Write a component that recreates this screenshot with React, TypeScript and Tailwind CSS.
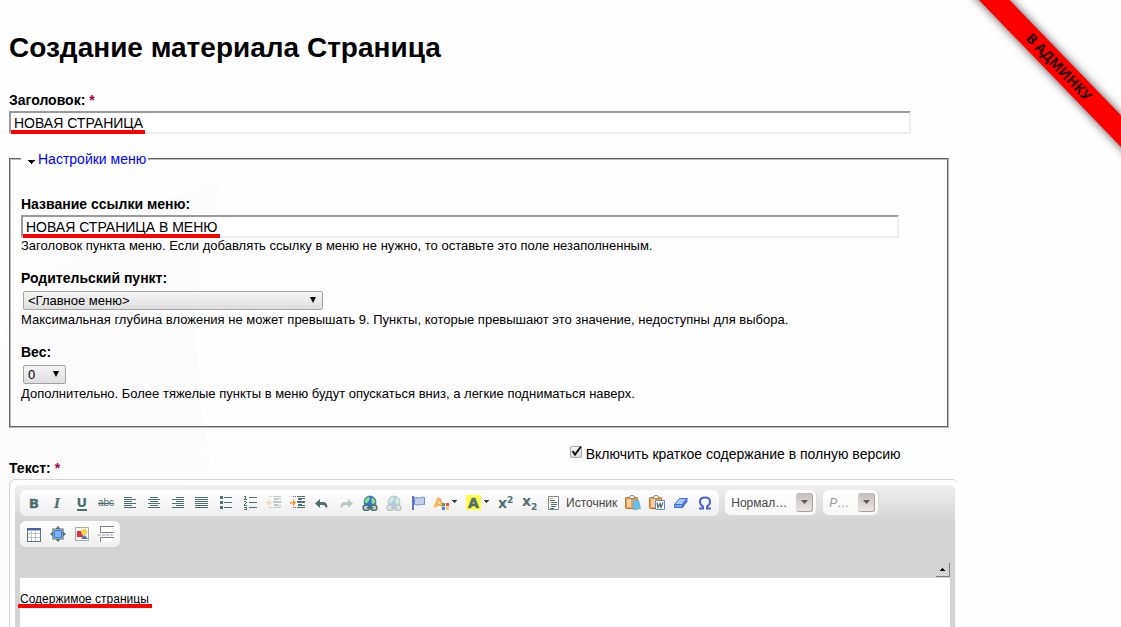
import { useState } from 'react'
import type { ReactNode } from 'react'

const INK = '#4f6f6f'

interface ToolProps {
  label: string
  children: ReactNode
  text?: string
  menu?: boolean
  disabled?: boolean
}

function Tool({ label, children, text, menu, disabled }: ToolProps) {
  return (
    <button
      type="button"
      title={label}
      aria-label={label}
      disabled={disabled}
      className="flex h-6 items-center px-1 text-xs text-[#474747] disabled:opacity-35"
    >
      <svg viewBox="0 0 16 16" className="size-4 shrink-0 overflow-visible" aria-hidden>
        {children}
      </svg>
      {text && <span className="pl-1">{text}</span>}
      {menu && (
        <svg viewBox="0 0 8 16" className="h-4 w-2" aria-hidden>
          <path d="M2 5h5v1H6v1H5v1H4V7H3V6H2z" fill="#3a3a3a" shapeRendering="crispEdges" />
        </svg>
      )}
    </button>
  )
}

// Horizontal 1px strokes, each given as [x, y, width]
function Lines({ rows, color = INK }: { rows: number[][]; color?: string }) {
  return (
    <g fill={color} shapeRendering="crispEdges">
      {rows.map(([x, y, w], i) => (
        <rect key={i} x={x} y={y} width={w} height={1} />
      ))}
    </g>
  )
}

function IndentLines() {
  return (
    <Lines
      rows={[
        [3, 1, 1], [5, 1, 1], [7, 1, 8],
        [8, 3, 7], [8, 4, 4],
        [7, 6, 8], [7, 7, 8],
        [8, 9, 4], [8, 10, 7],
        [3, 12, 1], [5, 12, 1], [7, 12, 8],
      ]}
    />
  )
}

function UndoArrow() {
  return <path d="M1 8.500 6 4v3h3c3 0 4.600 2 4.500 5.500h-2c0-1.500-1-2.500-2.500-2.500H6v3z" fill={INK} />
}

function Globe() {
  return (
    <>
      <circle cx="8" cy="7" r="6" fill="#3c6fd6" stroke="#37608f" strokeWidth=".7" />
      <path d="M3.500 4 6.500 1.700 8 3.500 6.500 6.500 4.500 8.500 2.500 7zM9.500 3l2.500.5 1.500 3-2 3.500-2-2.500z" fill="#7fe87a" />
      <rect x="1.200" y="10.200" width="6" height="5" rx="2" fill="#cdd6d6" stroke={INK} strokeWidth="1.500" />
      <rect x="8.800" y="10.200" width="6" height="5" rx="2" fill="#cdd6d6" stroke={INK} strokeWidth="1.500" />
      <path d="M4.500 12.700h7" stroke={INK} strokeWidth="1.500" />
    </>
  )
}

function Clipboard() {
  return (
    <>
      <rect x=".5" y="2.500" width="12" height="11" rx="1" fill="#f0a04b" stroke="#b9712f" />
      <path d="M2 4h4v8H2z" fill="#fbd09a" />
      <path d="M4 3.500V2l2-1.500h2L10 2v1.500z" fill="#eceae5" stroke="#8a7455" strokeWidth=".8" />
    </>
  )
}

function TextTools() {
  return (
    <div className="flex rounded-md bg-linear-to-b from-white to-[#efefef] px-0.5 py-px">
      <Tool label="Полужирный">
        <text x="3" y="13" fontFamily="DejaVu Sans" fontWeight="700" fontSize="13" fill={INK} stroke={INK} strokeWidth=".5">B</text>
      </Tool>
      <Tool label="Курсив">
        <text x="4" y="13" fontFamily="DejaVu Serif" fontWeight="700" fontStyle="italic" fontSize="13" fill={INK}>I</text>
      </Tool>
      <Tool label="Подчеркнутый">
        <text x="2.500" y="12" fontFamily="DejaVu Sans" fontWeight="700" fontSize="13" fill={INK}>U</text>
        <path d="M3 14h10v2H3z" fill={INK} />
      </Tool>
      <Tool label="Зачеркнутый">
        <text x="0" y="11" fontFamily="Liberation Sans" fontSize="10" fill={INK}>abc</text>
        <path d="M0 8h16v1H0z" fill={INK} />
      </Tool>
      <Tool label="По левому краю">
        <Lines rows={[[2, 2, 8], [2, 4, 12], [2, 6, 8], [2, 8, 12], [2, 10, 8], [2, 12, 12]]} />
      </Tool>
      <Tool label="По центру">
        <Lines rows={[[4, 2, 8], [2, 4, 12], [4, 6, 8], [2, 8, 12], [4, 10, 8], [2, 12, 12]]} />
      </Tool>
      <Tool label="По правому краю">
        <Lines rows={[[6, 2, 8], [2, 4, 12], [6, 6, 8], [2, 8, 12], [6, 10, 8], [2, 12, 12]]} />
      </Tool>
      <Tool label="По ширине">
        <Lines rows={[[1, 2, 13], [1, 4, 13], [1, 6, 13], [1, 8, 13], [1, 10, 13], [1, 12, 13]]} />
      </Tool>
      <Tool label="Маркированный список">
        <path d="M2 1h3v3H2zM2 6h3v3H2zM2 11h3v3H2z" fill={INK} />
        <Lines rows={[[6, 2, 8], [6, 7, 8], [6, 12, 8]]} />
      </Tool>
      <Tool label="Нумерованный список">
        <path
          d="M2 1h2v3H3V2H2zM2 4h3v1H2zM2 6h2v1h1v1H4v1H3v1h2v1H2V9h1V8h1V7H2zM2 12h3v3H2v-1h2v-1H2z"
          fill={INK}
          shapeRendering="crispEdges"
        />
        <Lines rows={[[7, 2, 8], [7, 7, 8], [7, 12, 8]]} />
      </Tool>
      <Tool label="Уменьшить отступ" disabled>
        <IndentLines />
        <path d="M0 7.500 3.500 4v3H6v1.500H3.500v3z" fill="#f5a040" />
      </Tool>
      <Tool label="Увеличить отступ">
        <IndentLines />
        <path d="M6 7.500 3 4v3H0v1.500h3v3z" fill="#f5962e" />
      </Tool>
      <Tool label="Отменить">
        <UndoArrow />
      </Tool>
      <Tool label="Повторить" disabled>
        <g transform="matrix(-1 0 0 1 16 0)">
          <UndoArrow />
        </g>
      </Tool>
      <Tool label="Вставить ссылку">
        <Globe />
      </Tool>
      <Tool label="Убрать ссылку" disabled>
        <Globe />
      </Tool>
      <Tool label="Вставить якорь">
        <path d="M2 1h2v14H2z" fill="#6a6fc4" />
        <path d="M4.500 2.500c2-1 3 1.200 5 .5s3-1 5-.5v7c-2-.5-3 0-5 .5s-3-1-5-.5z" fill="#c9d2e2" stroke="#5f8fe6" />
      </Tool>
      <Tool label="Цвет текста" menu>
        <text x="0" y="12" fontFamily="DejaVu Sans" fontWeight="700" fontSize="13" fill="#f7b262" stroke="#f7b262" strokeWidth=".3">A</text>
        <path d="M8 8h3v3H8z" fill="#3fa648" />
        <path d="M12 8h3v3h-3z" fill="#f04848" />
        <path d="M8 12h3v3H8z" fill="#4a80f0" />
        <path d="M12 12h3v3h-3z" fill="#f6cf52" />
      </Tool>
      <Tool label="Цвет фона" menu>
        <path d="M0 0h15v15H0z" fill="#ffff45" />
        <text x="2" y="12.500" fontFamily="DejaVu Sans" fontWeight="700" fontSize="14" fill={INK} stroke={INK} strokeWidth=".5">A</text>
      </Tool>
      <Tool label="Надстрочный индекс">
        <text x="0" y="13" fontFamily="DejaVu Sans" fontWeight="700" fontSize="14" fill={INK}>x</text>
        <text x="9" y="8" fontFamily="DejaVu Sans" fontWeight="700" fontSize="9" fill={INK}>2</text>
      </Tool>
      <Tool label="Подстрочный индекс">
        <text x="0" y="11" fontFamily="DejaVu Sans" fontWeight="700" fontSize="14" fill={INK}>x</text>
        <text x="9" y="15" fontFamily="DejaVu Sans" fontWeight="700" fontSize="9" fill={INK}>2</text>
      </Tool>
      <Tool label="Источник" text="Источник">
        <path d="M2.500 1.500h10v13h-10z" fill="#fff" stroke="#7d9191" />
        <Lines rows={[[4, 3, 3]]} color="#f5a040" />
        <Lines rows={[[4, 5, 5], [5, 7, 6], [5, 9, 6], [5, 11, 5], [4, 13, 4]]} />
      </Tool>
      <Tool label="Вставить только текст">
        <Clipboard />
        <path d="m7.500 5.500 6-.5 2 8.500-7 1.500z" fill="#62c3ea" stroke="#7aa5b8" strokeWidth=".7" />
      </Tool>
      <Tool label="Вставить из Word">
        <Clipboard />
        <path d="M6.500 5.500h9v9h-9z" fill="#fff" stroke="#6689cc" />
        <path d="m8 7.500 1 5 2-4 1 4 2-5" fill="none" stroke="#566a80" strokeWidth="1.300" />
      </Tool>
      <Tool label="Убрать форматирование">
        <path d="m1.500 9.500 5-6h7.500l-4.500 6z" fill="#a9c8fa" stroke="#416bd1" />
        <path d="M1.500 9.500h8v3h-8z" fill="#7ba4f0" stroke="#416bd1" />
        <path d="m9.500 9.500 4.500-6v3l-4.500 6z" fill="#5076dc" stroke="#416bd1" />
      </Tool>
      <Tool label="Вставить специальный символ">
        <path
          d="M2 13.500h4v-2C3.500 10 3 8.500 3 6.800 3 4.300 5 2.500 8 2.500s5 1.800 5 4.300c0 1.700-.5 3.200-3 4.700v2h4"
          fill="none"
          stroke="#4864d2"
          strokeWidth="2"
        />
      </Tool>
    </div>
  )
}

function InsertTools() {
  return (
    <div className="flex rounded-md bg-linear-to-b from-white to-[#efefef] px-0.5 py-px">
      <Tool label="Таблица">
        <g shapeRendering="crispEdges">
          <path d="M1 2h14v14H1z" fill="#5f7474" />
          <path d="M2 4h12v11H2z" fill="#b9c2c2" />
          <path d="M1 2h14v2H1z" fill="#4463a4" />
          <path d="M2 5h3v2H2zM6 5h3v2H6zM10 5h4v2h-4zM2 8h3v3H2zM6 8h3v3H6zM10 8h4v3h-4zM2 12h3v3H2zM6 12h3v3H6zM10 12h4v3h-4z" fill="#fff" />
        </g>
      </Tool>
      <Tool label="Развернуть">
        <path d="m8 0 2.500 3h-5zM8 16l2.500-3h-5zM0 8l3-2.500v5zM16 8l-3-2.500v5z" fill={INK} />
        <path d="M3 3h10v10H3z" fill="#e8f0f8" stroke={INK} strokeWidth="1.200" />
        <path d="M4.500 4.500h7v7h-7z" fill="#82b5f8" stroke="#3f71dc" />
      </Tool>
      <Tool label="Изображение">
        <path d="M1.500 1.500h13v13h-13z" fill="#f6f4f0" stroke="#aaa" />
        <path d="M3 5h6v6H3z" fill="#d53440" />
        <path d="M7 13 10.500 9l3.500 4z" fill="#4a78b0" />
        <circle cx="10" cy="6" r="3" fill="#f8d548" />
      </Tool>
      <Tool label="Разрыв страницы">
        <path d="M2 0h14v6H2zM2 11h14v5H2z" fill="#fff" />
        <path d="M2.500 0v6.500H16M2.500 16v-4.500H16M2 .5h14" fill="none" stroke="#858585" />
        <path d="M0 9h16" stroke="#8aa4c0" strokeDasharray="3 1" />
      </Tool>
    </div>
  )
}

function Combo({ label, value, muted }: { label: string; value: string; muted?: boolean }) {
  return (
    <button
      type="button"
      aria-label={label}
      className="flex h-[26px] items-center gap-[9px] rounded-md border-r border-b border-[#dcdcdc] bg-linear-to-b from-white to-[#f7f7f7] pr-[3px] pl-1.5 text-xs"
    >
      <span className={muted ? 'text-[#999] italic' : 'text-[#474747]'}>{value}</span>
      <span className="flex h-[19px] w-[17px] items-center justify-center rounded-[3px] border-r border-b border-[#a9a3a3] bg-linear-to-b from-[#c4bdbd] to-[#ebe6e6]">
        <svg viewBox="0 0 7 4" className="h-1 w-[7px]" aria-hidden>
          <path d="M0 0h7L3.500 4z" fill="#5c5656" />
        </svg>
      </span>
    </button>
  )
}

interface FieldProps {
  id: string
  label: string
  help?: string
  required?: boolean
  children: ReactNode
}

function Field({ id, label, help, required, children }: FieldProps) {
  return (
    <div>
      <label htmlFor={id} className="block w-fit text-sm/4 font-bold">
        {label}
        {required && <span className="text-[#a00040]"> *</span>}
      </label>
      <div className="mt-[3px] flex h-[23px] items-center">{children}</div>
      {help && <p className="text-[13px]/4">{help}</p>}
    </div>
  )
}

function TextInput({ id, initial, mark }: { id: string; initial: string; mark: string }) {
  const [value, setValue] = useState(initial)
  return (
    <div className="relative w-[95%]">
      <input
        id={id}
        type="text"
        value={value}
        onChange={e => setValue(e.target.value)}
        className="block h-[23px] w-full border-2 border-t-[#9a9a9a] border-r-[#eee] border-b-[#eee] border-l-[#9a9a9a] bg-white px-[3px] text-sm outline-none"
      />
      <span className={`absolute bottom-0 left-0.5 h-1 bg-[#f00] ${mark}`} />
    </div>
  )
}

function SelectBox({ id, options, width }: { id: string; options: string[]; width: string }) {
  return (
    <div className={`relative ml-0.5 ${width}`}>
      <select
        id={id}
        className="block h-[19px] w-full appearance-none rounded-xs border border-[#a3a3a3] bg-linear-to-b from-[#f6f6f6] to-[#dedede] pl-1 text-[13px]/4 outline-none"
      >
        {options.map(o => (
          <option key={o}>{o}</option>
        ))}
      </select>
      <svg viewBox="0 0 6 6" className="pointer-events-none absolute top-1.5 right-[7px] size-1.5" aria-hidden>
        <path d="M0 0h6L3 6z" />
      </svg>
    </div>
  )
}

function AdminRibbon() {
  return (
    <div className="absolute top-0 right-0 size-[200px] overflow-hidden">
      <a
        href="#admin"
        className="absolute top-14 -left-[22px] flex h-[22px] w-80 rotate-46 items-center justify-center bg-[#f00] font-['Open_Sans',sans-serif] text-sm font-bold text-[#200] shadow-[0_0_10px_#000000b0]"
      >
        В АДМИНКУ
      </a>
    </div>
  )
}

// Faint leaf shape behind the form
function Watermark() {
  return (
    <svg viewBox="0 0 320 480" className="pointer-events-none absolute top-[150px] left-0 w-80" aria-hidden>
      <path d="M222 30C120 60 40 110 0 190v260c70-50 150-80 210-135C190 210 190 110 222 30z" fill="#fcfcfc" />
    </svg>
  )
}

export default function App() {
  const [teaser, setTeaser] = useState(true)

  return (
    <div className="relative flex min-h-screen flex-col bg-[#fefefe] pl-[9px] font-['Liberation_Sans',Arial,sans-serif] text-black">
      <Watermark />
      <AdminRibbon />
      <form className="relative flex w-full max-w-[949px] flex-1 flex-col" onSubmit={e => e.preventDefault()}>
        <h1 className="mt-8 mb-7 text-[28px]/8 font-bold">Создание материала Страница</h1>

        <Field id="title" label="Заголовок:" required>
          <TextInput id="title" initial="НОВАЯ СТРАНИЦА" mark="w-[134px]" />
        </Field>

        <fieldset className="mt-[17px] mr-[9px] border-2 border-[#b8b8b8] pr-0.5 pb-6 pl-2.5 [border-style:groove]">
          <legend className="pr-0.5 text-sm/4">
            <a href="#menu" className="flex items-center text-[#00f]">
              <svg viewBox="0 0 17 16" className="h-4 w-[17px]" aria-hidden>
                <path d="M7 9h7v1h-1v1h-1v1h-1v1h-1v-1H9v-1H8v-1H7z" fill="#000" shapeRendering="crispEdges" />
              </svg>
              Настройки меню
            </a>
          </legend>
          <div className="flex flex-col gap-4 pt-[29px]">
            <Field
              id="link-title"
              label="Название ссылки меню:"
              help="Заголовок пункта меню. Если добавлять ссылку в меню не нужно, то оставьте это поле незаполненным."
            >
              <TextInput id="link-title" initial="НОВАЯ СТРАНИЦА В МЕНЮ" mark="w-[197px]" />
            </Field>
            <Field
              id="parent"
              label="Родительский пункт:"
              help="Максимальная глубина вложения не может превышать 9. Пункты, которые превышают это значение, недоступны для выбора."
            >
              <SelectBox id="parent" options={['<Главное меню>']} width="w-[300px]" />
            </Field>
            <Field
              id="weight"
              label="Вес:"
              help="Дополнительно. Более тяжелые пункты в меню будут опускаться вниз, а легкие подниматься наверх."
            >
              <SelectBox id="weight" options={['0', '1', '2', '3']} width="w-[43px]" />
            </Field>
          </div>
        </fieldset>

        <div className="mt-[18px] flex w-[95%] items-start justify-between pr-2.5">
          <label htmlFor="body" className="pt-3.5 text-sm/4 font-bold">
            Текст: <span className="text-[#a00040]">*</span>
          </label>
          <label className="flex gap-1 text-sm/4">
            <span className="relative size-3">
              <input
                type="checkbox"
                checked={teaser}
                onChange={e => setTeaser(e.target.checked)}
                className="block size-3 appearance-none rounded-xs border border-[#a9a9a9] bg-linear-to-b from-[#f4f4f4] to-[#dcdcdc]"
              />
              {teaser && (
                <svg viewBox="0 0 12 12" className="pointer-events-none absolute inset-0 size-3 overflow-visible" aria-hidden>
                  <path d="m2.500 5 2.500 3.500L11 .5" fill="none" stroke="#111" strokeWidth="2" />
                </svg>
              )}
            </span>
            Включить краткое содержание в полную версию
          </label>
        </div>

        <div className="mt-[3px] flex flex-1 flex-col rounded-t-md border-t border-l border-[#d3d3d3] pt-[5px] pr-[3px] pl-[5px]">
          <div className="flex flex-1 flex-col rounded-t-md bg-[#d3d3d3] px-[5px]">
            <div className="-mx-[5px] rounded-t-md bg-linear-to-b from-[#f0f0f0] to-[#d3d3d3] to-40% px-[5px] pt-[5px] pb-px">
              <div className="flex flex-wrap gap-x-1.5 gap-y-[5px]">
                <TextTools />
                <Combo label="Форматирование" value="Нормал…" />
                <Combo label="Размер" value="Р…" muted />
                <InsertTools />
              </div>
              <div className="mt-4 flex justify-end">
                <button
                  type="button"
                  aria-label="Свернуть панель инструментов"
                  className="flex size-3.5 items-center justify-center border-r border-b border-[#808080]"
                >
                  <svg viewBox="0 0 5 3" className="h-[3px] w-[5px]" aria-hidden>
                    <path d="M2 0h1v1h1v1h1v1H0V2h1V1h1z" shapeRendering="crispEdges" />
                  </svg>
                </button>
              </div>
            </div>
            <div className="relative flex flex-1 bg-white">
              <textarea
                id="body"
                defaultValue="Содержимое страницы"
                className="w-full resize-none pt-3 text-xs/[18px] outline-none"
              />
              <span className="absolute top-[26px] -left-0.5 h-1 w-[134px] bg-[#f00]" />
            </div>
          </div>
        </div>
      </form>
    </div>
  )
}
